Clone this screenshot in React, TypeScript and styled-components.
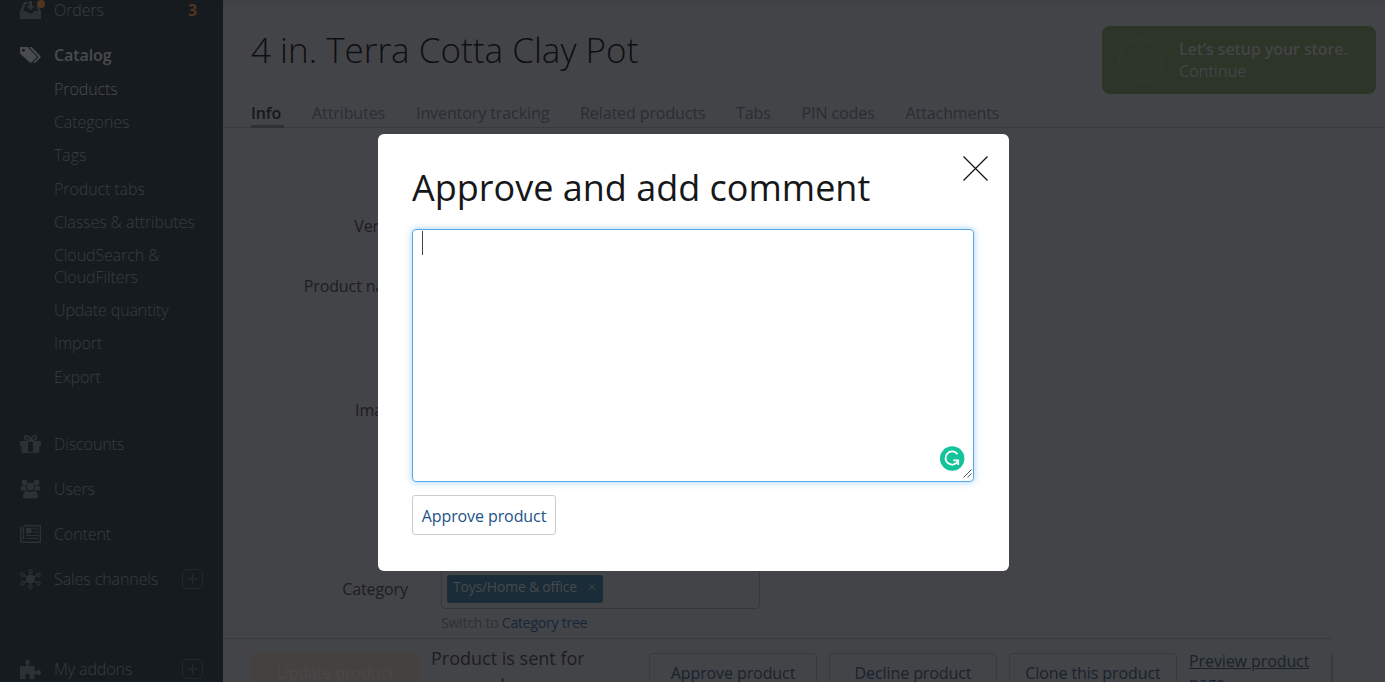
import React from "react";
import styled, { createGlobalStyle } from "styled-components";

const GlobalStyle = createGlobalStyle`
  * { box-sizing: border-box; }
  html, body { margin: 0; height: 100%; overflow: hidden; }
  body {
    font-family: "Open Sans", "Noto Sans", sans-serif;
    font-size: 16px;
    line-height: 22px;
    letter-spacing: -0.09px;
    background: #434447;
  }
`;

const Page = styled.div`
  display: flex;
  width: 100%;
  height: 682px;
  overflow: hidden;
`;

const Sidebar = styled.nav`
  flex: none;
  width: 223px;
  height: 682px;
  overflow: hidden;
  background: #161b1f;
  color: #383d42;
`;

const MenuList = styled.div`
  margin-top: -13px;
  font-weight: 300;
`;

const MenuRow = styled.div<{ $active?: boolean; $gap?: number }>`
  display: flex;
  align-items: center;
  height: 45px;
  margin-top: ${(p) => p.$gap ?? 0}px;
  padding: 0 20px;
  color: ${(p) => (p.$active ? "#4a4b4e" : "inherit")};
  font-weight: ${(p) => (p.$active ? 600 : 300)};
`;

const MenuIcon = styled.svg<{ $active?: boolean }>`
  flex: none;
  width: 26px;
  height: 22px;
  margin-right: 8px;
  overflow: visible;
  color: ${(p) => (p.$active ? "#4a4b4e" : "#2c3135")};
  fill: currentColor;
`;

const MenuLabel = styled.span`
  flex: 1;
`;

const Count = styled.span`
  margin-right: 6px;
  color: #53351f;
  font-weight: 700;
`;

const PlusBox = styled.svg`
  width: 21px;
  height: 20px;
  fill: none;
  stroke: #24292d;
`;

const SubMenu = styled.div`
  display: flex;
  flex-direction: column;
  gap: 11.2px;
  padding: 1px 20px 0 54px;
`;

const SubItem = styled.a<{ $active?: boolean }>`
  color: ${(p) => (p.$active ? "#4a4b4e" : "inherit")};
`;

const Main = styled.main`
  flex: 1;
  display: flex;
  flex-direction: column;
  min-width: 0;
  height: 682px;
  background: linear-gradient(#3e3f42, #434447 8px);
  color: #1c1d20;
`;

const Header = styled.header`
  flex: none;
  display: flex;
  justify-content: space-between;
  height: 102px;
  padding: 26px 9px 0 28px;
`;

const Title = styled.h1`
  margin: 0;
  font-size: 35px;
  line-height: 48px;
  font-weight: 300;
  letter-spacing: 0.02px;
  color: #0e0f12;
`;

const SetupCard = styled.div`
  display: flex;
  align-items: center;
  gap: 16px;
  width: 274px;
  height: 68px;
  padding: 0 16px;
  border-radius: 8px;
  background: #2d3528;
  color: #434447;
`;

const Ring = styled.div`
  width: 45px;
  height: 45px;
  border: 2px solid #2f382b;
  border-radius: 50%;
`;

const SetupTitle = styled.div`
  font-weight: 600;
`;

const Tabs = styled.div`
  flex: none;
  display: flex;
  height: 26px;
  padding-left: 28px;
  border-bottom: 1px solid #393a3d;
  color: #282e33;
`;

const Tab = styled.div<{ $active?: boolean; $w: number }>`
  width: ${(p) => p.$w}px;
  height: 26px;
  white-space: nowrap;
  color: ${(p) => (p.$active ? "#17181b" : "inherit")};
  font-weight: ${(p) => (p.$active ? 600 : 400)};
`;

const TabMark = styled.div`
  width: 33px;
  height: 3px;
  margin-top: 1px;
  background: #303134;
`;

const Form = styled.section`
  flex: none;
  display: flex;
  flex-direction: column;
  height: 510px;
  padding-top: 87px;
`;

const FormRow = styled.div<{ $h: number }>`
  display: flex;
  height: ${(p) => p.$h}px;
`;

const FormLabel = styled.label`
  width: 185px;
  margin-right: 33px;
  text-align: right;
`;

const CategoryField = styled.div`
  display: flex;
  flex-direction: column;
  gap: 3px;
  margin-top: -13px;
  font-size: 14px;
  letter-spacing: -0.22px;
  color: #2f3033;
`;

const CategoryBox = styled.div`
  display: flex;
  align-items: flex-start;
  width: 319px;
  height: 44px;
  padding: 9px 5px;
  border: 1px solid #36373a;
  border-radius: 4px;
`;

const Chip = styled.span`
  display: flex;
  gap: 11px;
  height: 28px;
  padding: 0 7px 0 6px;
  line-height: 24px;
  border-radius: 3px;
  background: #1a2c37;
  color: #46494c;
`;

const ChipClose = styled.span`
  color: #34434c;
`;

const SwitchLink = styled.a`
  color: #17243a;
`;

const ActionBar = styled.footer`
  flex: none;
  display: flex;
  align-items: flex-start;
  width: 1110px;
  height: 43px;
  padding: 14px 0 0 28px;
  overflow: hidden;
  border-style: solid;
  border-width: 0 2px 0 0;
  border-image: linear-gradient(#434447 25%, #37383b 45%) 1;
`;

const BarLine = styled.div`
  flex: none;
  width: 1108px;
  height: 1px;
  background: #393a3d;
`;

const Button = styled.button<{ $primary?: boolean }>`
  flex: none;
  width: ${(p) => (p.$primary ? 169 : 168)}px;
  height: 40px;
  margin-right: 12px;
  padding: 0;
  border: 1px solid ${(p) => (p.$primary ? "#45413e" : "#393a3d")};
  border-radius: 4px;
  background: ${(p) => (p.$primary ? "#45413e" : "transparent")};
  color: ${(p) => (p.$primary ? "#47494c" : "#18222e")};
  font: inherit;
  letter-spacing: inherit;
`;

const Status = styled.div`
  flex: none;
  width: 218px;
  height: 40px;
  margin: -8px 0 0 -1px;
  padding-right: 40px;
  font-size: 18px;
  line-height: 27px;
  letter-spacing: 0;
`;

const PreviewLink = styled.a`
  width: 135px;
  margin-top: -3px;
  color: #18222e;
  text-decoration: underline;
`;

const ModalLayer = styled.div`
  position: fixed;
  inset: 0 0 auto 0;
  padding: 134px 0 0 378px;
`;

const Modal = styled.div`
  width: 631px;
  height: 437px;
  padding: 29px 35px 0 34px;
  border-radius: 6px;
  background: #fff;
  color: #161719;
`;

const ModalHead = styled.div`
  display: flex;
  justify-content: space-between;
  height: 66px;
`;

const ModalTitle = styled.h2`
  margin: 0;
  font-size: 36px;
  line-height: 50px;
  font-weight: 400;
  letter-spacing: 0;
  white-space: nowrap;
`;

const CloseIcon = styled.svg`
  width: 25px;
  height: 25px;
  margin: -7px -14px 0 0;
  stroke: #161616;
  stroke-width: 1.3;
`;

const CommentBox = styled.div`
  display: flex;
  flex-direction: column;
  justify-content: space-between;
  width: 562px;
  height: 253px;
  padding: 1px 1px 3px 9px;
  border: 1px solid #5aa7e4;
  border-radius: 4px;
  box-shadow: 0 0 7px rgba(82, 168, 236, 0.55);
`;

const Caret = styled.div`
  width: 1px;
  height: 24px;
  background: #444;
`;

const BoxTools = styled.div`
  display: flex;
  justify-content: flex-end;
  align-items: flex-end;
`;

const AssistantBadge = styled.svg`
  width: 25px;
  height: 25px;
  margin: 0 -2px 7px 0;
`;

const ApproveButton = styled.button`
  display: block;
  width: 144px;
  height: 40px;
  margin-top: 13px;
  padding: 1px 0 0;
  border: 1px solid #ccc;
  border-radius: 3px;
  background: #fff;
  color: #1d5187;
  font: inherit;
  letter-spacing: inherit;
`;

const OrdersIcon = () => (
  <MenuIcon viewBox="0 0 26 22">
    <path d="M4 3H8V5H5.6L3.2 12H6.5L8.5 14.2H12.5L14.5 12H18L16.5 7H18.5L21 12V20H0V12Z" />
    <path d="M9 2h3v5h2.8l-4.3 4.2L6.200 7H9z" />
    <circle cx="21" cy="5" r="4" fill="#53351f" />
  </MenuIcon>
);

const CatalogIcon = () => (
  <MenuIcon viewBox="0 0 26 22" $active>
    <path fillRule="evenodd" d="M0 3.500Q0 3 1 3H7.500L16.500 12.200Q17 13 16.500 13.500L11.500 18.500Q10.500 19 9.800 18.400L0 9.500ZM3.500 4.700a1.500 1.500 0 1 0 .01 0Z" />
    <path d="M9 3H11.800L20.500 12.200Q21 12.800 20.500 13.500L15.300 18.700Q14.300 19.300 13.400 18.500L18.400 13Z" />
  </MenuIcon>
);

const GiftIcon = () => (
  <MenuIcon viewBox="0 0 26 22">
    <path d="M0 8H8V20H3Q1.500 20 1.500 18.500V13H0ZM13 8H21V13H19.500V18.500Q19.500 20 18 20H13ZM8 7H13V9H8ZM8 19H13V20H8Z" />
    <path d="M10.500 7.500C8 7.500 4.200 6.800 4.700 4.200C5.200 1.500 9.500 2.500 10.500 7.500C11.500 2.500 15.800 1.500 16.300 4.200C16.800 6.800 13 7.500 10.500 7.500Z" fill="none" stroke="currentColor" strokeWidth="1.700" />
  </MenuIcon>
);

const UsersIcon = () => (
  <MenuIcon viewBox="0 0 26 22">
    <circle cx="4.500" cy="4.500" r="2.900" />
    <circle cx="16.500" cy="4.500" r="2.900" />
    <circle cx="10.500" cy="8.500" r="3.900" />
    <path d="M2.500 7.800H5.500Q5.800 10.800 7.200 12.500H1.500Q-1 10 2.500 7.800ZM18.500 7.800H15.500Q15.200 10.800 13.800 12.500H19.500Q22 10 18.500 7.800ZM5 13H7Q10.500 14.800 14 13H16Q18 15 18 18.500Q18 20.500 16 20.500H5Q3 20.500 3 18.500Q3 15 5 13Z" />
  </MenuIcon>
);

const ContentIcon = () => (
  <MenuIcon viewBox="0 0 26 22">
    <path d="M3.500 2.800H20.300V19.200H2.500Q.7 19.200 .7 17.500V5H3.500V16.500" fill="none" stroke="currentColor" strokeWidth="1.400" />
    <path d="M6 5H11.500V10.500H6ZM12.500 5.500H18.500V6.600H12.500ZM12.500 8.500H18.500V9.600H12.500ZM6 12H18.500V13.100H6ZM6 15H18V16.100H6Z" />
  </MenuIcon>
);

const ChannelsIcon = () => (
  <MenuIcon viewBox="0 0 26 22">
    <circle cx="10.500" cy="11" r="4.600" />
    <g fill="none" stroke="currentColor" strokeWidth="1.200">
      <path d="M10.500 5V17M4 7.500L17 14.500M17 7.500L4 14.500" />
      <circle cx="10.500" cy="3.200" r="1.700" />
      <circle cx="10.500" cy="18.800" r="1.700" />
      <circle cx="2.500" cy="6.700" r="1.700" />
      <circle cx="18.500" cy="6.700" r="1.700" />
      <circle cx="2.500" cy="15.300" r="1.700" />
      <circle cx="18.500" cy="15.300" r="1.700" />
    </g>
  </MenuIcon>
);

const AddonsIcon = () => (
  <MenuIcon viewBox="0 0 26 22">
    <path d="M0 8H6.500V6.500Q4.500 5 5.300 3Q7.500 .2 9.700 3Q10.500 5 8.500 6.500V8H14.500V13H17Q18.500 11 20.300 12.500Q22 14.500 20.300 16.500Q18.500 18 17 16H14.500V21H9.500V18.500Q10.500 16 7.500 15.500Q4.500 16 5.500 18.500V21H0Z" />
  </MenuIcon>
);

const Plus = () => (
  <PlusBox viewBox="0 0 21 20">
    <rect x=".5" y=".5" width="20" height="19" rx="5" />
    <path d="M5 10H16M10.500 4.500V15.500" strokeWidth="1.300" />
  </PlusBox>
);

const subItems = [
  "Products", "Categories", "Tags", "Product tabs", "Classes & attributes",
  "CloudSearch & CloudFilters", "Update quantity", "Import", "Export",
];

const tabs: [string, number][] = [
  ["Info", 61], ["Attributes", 104], ["Inventory tracking", 164],
  ["Related products", 156], ["Tabs", 65.5], ["PIN codes", 104], ["Attachments", 100],
];

export default function App() {
  return (
    <>
      <GlobalStyle />
      <Page>
        <Sidebar>
          <MenuList>
            <MenuRow><OrdersIcon /><MenuLabel>Orders</MenuLabel><Count>3</Count></MenuRow>
            <MenuRow $active><CatalogIcon /><MenuLabel>Catalog</MenuLabel></MenuRow>
            <SubMenu>
              {subItems.map((s, i) => <SubItem key={s} $active={i === 0}>{s}</SubItem>)}
            </SubMenu>
            <MenuRow $gap={34.2}><GiftIcon /><MenuLabel>Discounts</MenuLabel></MenuRow>
            <MenuRow><UsersIcon /><MenuLabel>Users</MenuLabel></MenuRow>
            <MenuRow><ContentIcon /><MenuLabel>Content</MenuLabel></MenuRow>
            <MenuRow><ChannelsIcon /><MenuLabel>Sales channels</MenuLabel><Plus /></MenuRow>
            <MenuRow $gap={45}><AddonsIcon /><MenuLabel>My addons</MenuLabel><Plus /></MenuRow>
          </MenuList>
        </Sidebar>
        <Main>
          <Header>
            <Title>4 in. Terra Cotta Clay Pot</Title>
            <SetupCard>
              <Ring />
              <div>
                <SetupTitle>Let’s setup your store.</SetupTitle>
                <div>Continue</div>
              </div>
            </SetupCard>
          </Header>
          <Tabs>
            {tabs.map(([t, w], i) => (
              <Tab key={t} $w={w} $active={i === 0}>{t}{i === 0 && <TabMark />}</Tab>
            ))}
          </Tabs>
          <Form>
            <FormRow $h={60}><FormLabel>Vendor</FormLabel></FormRow>
            <FormRow $h={124}><FormLabel>Product name</FormLabel></FormRow>
            <FormRow $h={179}><FormLabel>Images</FormLabel></FormRow>
            <FormRow $h={60}>
              <FormLabel>Category</FormLabel>
              <CategoryField>
                <CategoryBox>
                  <Chip>Toys/Home &amp; office <ChipClose>×</ChipClose></Chip>
                </CategoryBox>
                <div>Switch to <SwitchLink>Category tree</SwitchLink></div>
              </CategoryField>
            </FormRow>
          </Form>
          <BarLine />
          <ActionBar>
            <Button $primary>Update product</Button>
            <Status>Product is sent for approval</Status>
            <Button>Approve product</Button>
            <Button>Decline product</Button>
            <Button>Clone this product</Button>
            <PreviewLink>Preview product page</PreviewLink>
          </ActionBar>
        </Main>
      </Page>
      <ModalLayer>
        <Modal>
          <ModalHead>
            <ModalTitle>Approve and add comment</ModalTitle>
            <CloseIcon viewBox="0 0 25 25"><path d="M.5 .5L24.500 24.500M24.500 .5L.5 24.500" /></CloseIcon>
          </ModalHead>
          <CommentBox>
            <Caret />
            <BoxTools>
              <AssistantBadge viewBox="0 0 25 25">
                <circle cx="12.200" cy="12.500" r="12.200" fill="#15c39a" />
                <path d="M17.500 8.200A6.600 6.600 0 1 0 18 15" fill="none" stroke="#fff" strokeWidth="1.800" />
                <path d="M13.200 14.300H18.200V19" fill="none" stroke="#fff" strokeWidth="1.800" />
              </AssistantBadge>
              <svg width="9" height="9" viewBox="0 0 9 9">
                <path d="M.5 8.500L8.500 .5M4.500 8.500L8.500 4.500" stroke="#555" />
              </svg>
            </BoxTools>
          </CommentBox>
          <ApproveButton>Approve product</ApproveButton>
        </Modal>
      </ModalLayer>
    </>
  );
}
